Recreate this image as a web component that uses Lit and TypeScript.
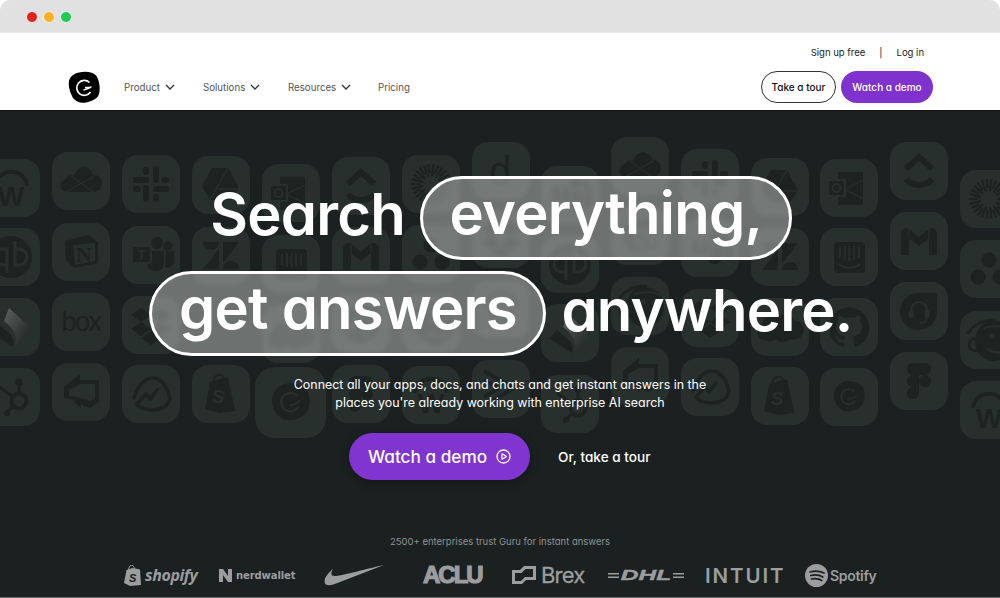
import { LitElement, html, css, svg } from "lit";
import { customElement } from "lit/decorators.js";

const T = "#28302d"; // tile colour
const D = "#1c2321"; // glyph colour

const spinner = () => {
  const out = [];
  for (let i = 0; i < 26; i++) {
    const a = (i / 26) * Math.PI * 2;
    const r1 = i % 2 ? 11 : 8;
    out.push(svg`<line x1=${29 + Math.cos(a) * r1} y1=${29 + Math.sin(a) * r1} x2=${29 + Math.cos(a) * 20} y2=${29 + Math.sin(a) * 20} stroke=${D} stroke-width="2.3"/>`);
  }
  return out;
};

const ICONS: Record<string, unknown> = {
  wrike: svg`<path d="M13 27C15 8 43 8 45 27" fill="none" stroke=${D} stroke-width="4"/><text x="29" y="47" text-anchor="middle" font-family="Liberation Sans" font-weight="700" font-size="28" fill=${D}>W</text>`,
  onedrive: svg`<path d="M16 40C7 40 6 29 14 27C15 24 19 22 22 24C25 13 38 12 41 23C48 22 52 30 49 35C47 39 44 40 42 40Z" fill=${D}/><path d="M19 24L41 40M44 23L14 40" stroke=${T} stroke-width="1.2"/>`,
  slack: svg`<g fill=${D}><rect x="11" y="22" width="16" height="6" rx="3"/><rect x="21" y="12" width="6" height="8" rx="3"/><rect x="31" y="11" width="6" height="17" rx="3"/><rect x="39" y="22" width="8" height="6" rx="3"/><rect x="31" y="31" width="16" height="6" rx="3"/><rect x="31" y="39" width="6" height="8" rx="3"/><rect x="21" y="30" width="6" height="17" rx="3"/><rect x="11" y="31" width="8" height="6" rx="3"/></g>`,
  drive: svg`<path d="M20 12H36L47 32L39 44H18L10 30Z" fill=${D}/><path d="M36 12L24 33H47M24 33L18 44" fill="none" stroke=${T} stroke-width="1.4"/>`,
  outlook: svg`<rect x="18" y="13" width="25" height="33" rx="1" fill=${D}/><path d="M24 30L44 21M24 30L44 40" stroke=${T} stroke-width="1.2"/><rect x="7" y="20" width="19" height="18" fill=${T}/><rect x="9" y="22" width="15" height="14" rx="1" fill=${D}/><circle cx="16.500" cy="29" r="4" fill="none" stroke=${T} stroke-width="2"/>`,
  clickup: svg`<path d="M16 27L29 15L42 27M16 37C22 45 36 45 42 37" fill="none" stroke=${D} stroke-width="6"/>`,
  spinner: svg`${spinner()}`,
  d: svg`<text x="28" y="43" text-anchor="middle" font-family="Liberation Sans" font-size="40" fill=${D}>d</text>`,
  qb: svg`<circle cx="29" cy="29" r="21" fill=${D}/><path d="M25 37H21A8 8 0 0 1 21 21H25V45M33 21H37A8 8 0 0 1 37 37H33V13" fill="none" stroke=${T} stroke-width="3"/>`,
  notion: svg`<path d="M13 18L36 12L46 19V40L22 45L14 37Z" fill=${D}/><path d="M21 22L43 20V38L23 42Z" fill=${T}/><text x="32" y="39" text-anchor="middle" font-family="Liberation Serif" font-weight="700" font-size="22" fill=${D}>N</text>`,
  teams: svg`<circle cx="35" cy="17" r="6" fill=${D}/><circle cx="46" cy="20" r="4.500" fill=${D}/><path d="M25 25H42V39A9 9 0 0 1 25 39Z" fill=${D}/><path d="M44 25H52V35A6.500 6.500 0 0 1 43 41Z" fill=${D}/><rect x="9" y="19" width="21" height="19" rx="2" fill=${T}/><rect x="11" y="21" width="17" height="15" rx="1.500" fill=${D}/><text x="19.500" y="33" text-anchor="middle" font-family="Liberation Sans" font-weight="700" font-size="13" fill=${T}>T</text>`,
  zendesk: svg`<g fill=${D}><path d="M11 15H27A8 8 0 0 1 11 15Z"/><path d="M27 22V42H11Z"/><path d="M31 36V15H47Z"/><path d="M31 42A8 8 0 0 1 47 42Z"/></g>`,
  intercom: svg`<rect x="14" y="14" width="31" height="31" rx="4" fill=${D}/><path d="M20 19V30M25 18V32M29.500 18V33M34 18V32M39 19V30M19 36C25 41 34 41 40 36" fill="none" stroke=${T} stroke-width="1.700"/>`,
  gmail: svg`<path d="M11 22C11 16 17 14 21 18L29 25L37 18C41 14 47 16 47 22V43H39V26L29 34L19 26V43H11Z" fill=${D}/><path d="M19 26V17M39 26V17" stroke=${T} stroke-width="1.200"/>`,
  asana: svg`<g fill=${D}><circle cx="29" cy="20" r="7.500"/><circle cx="18" cy="37" r="7.500"/><circle cx="40" cy="37" r="7.500"/></g>`,
  box: svg`<text x="29" y="38" text-anchor="middle" font-family="Liberation Sans" font-size="27" letter-spacing="-1.500" fill=${D}>box</text>`,
  dropbox: svg`<path d="M19 12L29 19L19 26L9 19ZM39 12L49 19L39 26L29 19ZM19 26L29 33L19 40L9 33ZM39 26L49 33L39 40L29 33ZM19 42L29 35L39 42L29 49Z" fill=${D}/>`,
  smart: svg`<defs><linearGradient id="sg" x1="0" y1="0" x2="1" y2="1"><stop offset="0" stop-color="#5c6361"/><stop offset="1" stop-color="#181d1c"/></linearGradient></defs><path d="M27 10L49 30L33 49C36 37 31 30 22 23Z" fill="url(#sg)"/><path d="M16 26L29 37C32 41 32 45 31 49L8 34Z" fill=${D}/>`,
  cloud: svg`<path d="M14 42C5 42 3 30 11 27C11 19 20 15 26 20C31 14 41 15 44 23C51 23 55 31 51 37C48 42 43 42 39 41C35 45 28 45 25 41C21 44 17 44 14 42Z" fill=${D}/>`,
  github: svg`<g transform="translate(9 9) scale(1.680)"><path fill=${D} d="M12 .297c-6.63 0-12 5.373-12 12 0 5.303 3.438 9.8 8.205 11.385.6.113.82-.258.82-.577 0-.285-.01-1.04-.015-2.04-3.338.724-4.042-1.61-4.042-1.61C4.422 18.07 3.633 17.7 3.633 17.7c-1.087-.744.084-.729.084-.729 1.205.084 1.838 1.236 1.838 1.236 1.07 1.835 2.809 1.305 3.495.998.108-.776.417-1.305.76-1.605-2.665-.3-5.466-1.332-5.466-5.93 0-1.31.465-2.38 1.235-3.22-.135-.303-.54-1.523.105-3.176 0 0 1.005-.322 3.3 1.23.96-.267 1.98-.399 3-.405 1.02.006 2.04.138 3 .405 2.28-1.552 3.285-1.23 3.285-1.23.645 1.653.24 2.873.12 3.176.765.84 1.23 1.91 1.23 3.22 0 4.61-2.805 5.625-5.475 5.92.42.36.81 1.096.81 2.22 0 1.606-.015 2.896-.015 3.286 0 .315.21.69.825.57C20.565 22.092 24 17.592 24 12.297c0-6.627-5.373-12-12-12"/></g>`,
  headset: svg`<path d="M29 11H44A3 3 0 0 1 47 14V30A18.500 18.500 0 1 1 29 11Z" fill=${D}/><path d="M21 33V28A8 8 0 0 1 37 28V33M37 35C37 39 34 41 30 41" fill="none" stroke=${T} stroke-width="2"/><rect x="18.500" y="28" width="5" height="8" rx="2" fill=${T}/><rect x="34.500" y="28" width="5" height="8" rx="2" fill=${T}/>`,
  chimp: svg`<ellipse cx="34" cy="30" rx="19" ry="20" fill=${D}/><circle cx="15" cy="34" r="6" fill="none" stroke=${D} stroke-width="2.500"/><path d="M8 23C12 14 24 8 36 9" fill="none" stroke=${D} stroke-width="3"/><circle cx="32" cy="25" r="2.500" fill=${T}/><circle cx="43" cy="25" r="2.500" fill=${T}/><path d="M27 37C32 43 42 43 47 37" fill="none" stroke=${T} stroke-width="2.500"/><path d="M24 18C28 14 44 14 50 19" fill="none" stroke=${T} stroke-width="1.800"/>`,
  hubspot: svg`<g fill="none" stroke=${D}><circle cx="37" cy="33" r="7.500" stroke-width="4"/><path d="M37 24V15M30 39L25 45M30 28L16 18" stroke-width="3"/></g><g fill=${D}><circle cx="37" cy="14" r="3.800"/><circle cx="25" cy="45" r="3"/></g>`,
  office: svg`<path d="M12 24L28 11V17L47 17V39L38 45L21 38L29 38L12 35ZM17 27V33L29 35L38 38L43 36V21L28 21Z" fill=${D} fill-rule="evenodd"/><path d="M21 38L29 36V45Z" fill=${D}/>`,
  basecamp: svg`<path d="M12 33C15 22 22 13 31 13C40 13 46 24 48 33C47 41 39 45 30 45C23 45 18 43 15 39L24 29L28 34L35 25" fill="none" stroke=${D} stroke-width="3.500" stroke-linecap="round" stroke-linejoin="round"/>`,
  shopify: svg`<path d="M13 44L18 17L36 12L43 46L28 48Z" fill=${D}/><path d="M21 18C22 8 31 7 32 14" fill="none" stroke=${D} stroke-width="1.600"/><text x="26" y="38" text-anchor="middle" font-family="Liberation Sans" font-weight="700" font-style="italic" font-size="19" fill=${T}>S</text>`,
  guru: svg`<g transform="translate(8 8) scale(.72)"><path d="M20 9C29 5 42 8 48 15C52 22 52 33 47 41C42 47 32 50 24 49C16 47 9 39 8 28C8 20 13 12 20 9Z" fill=${D}/><path d="M37 22A10.500 10.500 0 1 0 38 34" fill="none" stroke=${T} stroke-width="2.500"/><path d="M28 32C32 32 36 31 40 27" fill="none" stroke=${T} stroke-width="2"/></g>`,
  figma: svg`<g fill=${D}><path d="M29 11H23A6 6 0 0 0 23 23H29Z"/><path d="M29 11H35A6 6 0 0 1 35 23H29Z"/><path d="M29 23H23A6 6 0 0 0 23 35H29Z"/><circle cx="35" cy="29" r="6"/><path d="M23 35H29V41A6 6 0 1 1 23 35Z"/></g>`,
  arrows: svg`<path d="M12 11L42 28L12 46M12 20L27 28L12 37" fill="none" stroke=${D} stroke-width="3.500"/>`,
};

const TILES: [number, number, string, number?][] = [
  [-18, 159, "wrike"], [-18, 228, "qb"], [-18, 298, "smart"], [-18, 368, "hubspot"],
  [52, 152, "onedrive"], [52, 223, "notion"], [52, 293, "box"], [52, 363, "office"],
  [122, 155, "slack"], [122, 226, "teams"], [122, 296, "dropbox"], [122, 365, "basecamp"],
  [192, 156, "drive"], [192, 227, "zendesk"], [192, 365, "shopify"],
  [262, 164, "outlook"], [262, 235, "intercom"], [262, 305, "cloud"], [255, 367, "guru", 71],
  [332, 157, "clickup"], [332, 227, "gmail"], [332, 295, "headset"], [332, 365, "figma"],
  [402, 155, "spinner"], [402, 225, "asana"], [402, 295, "chimp"], [402, 366, "wrike"],
  [472, 142, "d"], [472, 210, "dropbox"], [472, 280, "wrike"], [472, 360, "arrows"],
  [541, 166, "teams"], [541, 235, "qb"], [541, 304, "smart"], [541, 375, "hubspot"],
  [611, 137, "onedrive"], [611, 207, "notion"], [611, 277, "chimp"], [611, 347, "office"],
  [681, 149, "slack"], [681, 219, "teams"], [681, 289, "dropbox"], [681, 358, "basecamp"],
  [751, 158, "drive"], [751, 228, "zendesk"], [751, 298, "cloud"], [751, 367, "shopify"],
  [820, 159, "outlook"], [820, 228, "intercom"], [820, 298, "github"], [820, 368, "guru"],
  [890, 142, "clickup"], [890, 212, "gmail"], [890, 282, "headset"], [890, 352, "figma"],
  [960, 170, "spinner"], [960, 240, "asana"], [960, 311, "chimp"], [960, 381, "wrike"],
];

const chevron = html`<svg class="chev" width="10" height="6" viewBox="0 0 10 6"><path d="M1 1L5 5L9 1" fill="none" stroke="#333" stroke-width="1.300"/></svg>`;

@customElement("app-root")
export class AppRoot extends LitElement {
  static styles = css`
    :host { display: block; width: 1000px; height: 598px; overflow: hidden; background: #fff;
      font-family: "Inter", "Liberation Sans", sans-serif; font-feature-settings: "cv11" 1; }
    * { box-sizing: border-box; }
    .page { display: flex; flex-direction: column; height: 598px; }
    .chrome { height: 33px; background: #e1e1e1; border-radius: 10px 10px 0 0; display: flex; align-items: center; gap: 5px; padding: 1px 0 0 26px; flex: none; border-bottom: 1px solid #e9e9e9; }
    .dot { width: 12px; height: 12px; border-radius: 50%; border: 1px solid #f4f4f4; }
    .red { background: #e0241b; } .amber { background: #fdb022; } .green { background: #1fcb51; }
    .top { height: 77px; flex: none; background: #fff; padding: 0 67px 0 68px; display: flex; flex-direction: column; }
    .util { display: flex; justify-content: flex-end; align-items: center; height: 38px; padding-right: 9px; font-size: 9.500px; color: #222; gap: 14px; }
    .main { display: flex; align-items: center; height: 32px; }
    .logo { width: 32px; height: 32px; flex: none; display: block; }
    .nav { display: flex; align-items: center; margin-left: 24px; font-size: 9.700px; color: #555; flex: 1; }
    .nav span { display: inline-flex; align-items: center; gap: 5px; }
    .nav .i1 { width: 79px; } .nav .i2 { width: 85px; } .nav .i3 { width: 90px; }
    .chev { flex: none; }
    .btn { height: 32px; border-radius: 16px; display: flex; align-items: center; justify-content: center; font-size: 10px; font-weight: 500; flex: none; }
    .tour { width: 75px; border: 1px solid #333; color: #111; margin-right: 5px; }
    .demo { width: 92px; background: #7f32cd; color: #fff; }
    .hero { flex: 1; background: #1b2120; position: relative; overflow: hidden; border-top: 1px solid #111; border-bottom: 1px solid #6b6e6e; display: flex; flex-direction: column; align-items: center; color: #fff; padding-top: 65px; }
    .canvas { position: absolute; left: 0; top: -111px; width: 1000px; height: 598px; }
    .tile { position: absolute; width: 58px; height: 58px; border-radius: 16px; background: #28302d; }
    .tile svg { display: block; width: 100%; height: 100%; }
    .line { position: relative; display: flex; align-items: center; gap: 15px; font-size: 58px; font-weight: 560; letter-spacing: -0.75px; height: 84px; white-space: nowrap; transform: translateX(1px); }
    .line + .line { margin-top: 11px; height: 85px; }
    .bare { line-height: 70px; padding-bottom: 8px; }
    .pill { display: block; height: 100%; border: 3px solid #fff; border-radius: 44px; background: rgba(255,255,255,.36); backdrop-filter: blur(2px); padding: 0 26.500px; line-height: 68px; }
    .sub { position: relative; margin: 20px 0 0; font-size: 12.450px; line-height: 18px; text-align: center; color: #fff; }
    .cta { position: relative; display: flex; align-items: center; margin-top: 21px; }
    .watch { width: 181px; height: 47px; border-radius: 24px; background: #8035d0; display: flex; align-items: center; justify-content: center; gap: 9px; font-size: 17.200px; font-weight: 500; box-shadow: 0 2px 8px rgba(0,0,0,.35); }
    .alt { margin-left: 28px; font-size: 13.600px; font-weight: 500; width: 93px; white-space: nowrap; }
    .trust { position: relative; margin-top: 55px; font-size: 9.500px; color: #8f9291; line-height: 14px; }
    .logos { position: relative; display: flex; align-items: center; width: 1000px; height: 24px; margin-top: 14px; padding-left: 123px; color: #9b9d9f; white-space: nowrap; }
    .logos svg { display: block; flex: none; }
    .lg { display: flex; align-items: center; flex: none; }
    .shop { width: 96px; gap: 4px; font: italic 700 16px "Open Sans", sans-serif; letter-spacing: -.4px; }
    .nerd { width: 105px; gap: 4px; font: 700 10px "DejaVu Sans", sans-serif; letter-spacing: -.1px; }
    .nike { width: 99px; }
    .aclu { width: 88px; font: 700 24px "Liberation Sans", sans-serif; letter-spacing: -2px; -webkit-text-stroke: 1.200px #9b9d9f; }
    .brex { width: 97px; gap: 5px; font: 400 22px "Inter", sans-serif; letter-spacing: -.8px; -webkit-text-stroke: .3px #9b9d9f; }
    .dhl { width: 97px; font: italic 700 14px "Liberation Sans", sans-serif; }
    .dhl span { display: inline-block; width: 54px; text-align: center; transform: scaleX(1.750); -webkit-text-stroke: .4px #9b9d9f; }
    .intuit { width: 100px; font: 600 20.500px "Inter", sans-serif; letter-spacing: 1.900px; }
    .spot { gap: 2px; font: 600 14px "Inter", sans-serif; letter-spacing: -.3px; }
  `;

  render() {
    return html`<div class="page">
      <div class="chrome"><i class="dot red"></i><i class="dot amber"></i><i class="dot green"></i></div>
      <header class="top">
        <div class="util"><span>Sign up free</span><span>|</span><span>Log in</span></div>
        <div class="main">
          <svg class="logo" viewBox="0 0 32 32">
            <path d="M11 1.500C17 0 25 .5 28.500 5C31.500 10 32.500 17 31 23C29.500 28 24 30 18 31.500C13 32.500 8 31 5 27C2 22 0 15 1 10C2 5.500 6 2.500 11 1.500Z" fill="#000"/>
            <path d="M21.500 11.500A7.500 7.500 0 1 0 22.500 21" fill="none" stroke="#fff" stroke-width="1.700"/>
            <path d="M15.500 19C19 18.500 21.500 17.500 23.500 15.500M17 16.500H23" fill="none" stroke="#fff" stroke-width="1.300"/>
          </svg>
          <nav class="nav">
            <span class="i1">Product ${chevron}</span>
            <span class="i2">Solutions ${chevron}</span>
            <span class="i3">Resources ${chevron}</span>
            <span>Pricing</span>
          </nav>
          <div class="btn tour">Take a tour</div>
          <div class="btn demo">Watch a demo</div>
        </div>
      </header>
      <section class="hero">
        <div class="canvas">
          ${TILES.map(([x, y, name, size]) => html`<div class="tile" style="left:${x}px;top:${y}px;${size ? `width:${size}px;height:${size}px;border-radius:20px;` : ""}"><svg viewBox="0 0 58 58">${ICONS[name]}</svg></div>`)}
        </div>
        <div class="line"><span class="bare">Search</span><span class="pill">everything,</span></div>
        <div class="line"><span class="pill">get answers</span><span class="bare">anywhere.</span></div>
        <p class="sub">Connect all your apps, docs, and chats and get instant answers in the<br>places you're already working with enterprise AI search</p>
        <div class="cta">
          <div class="watch">Watch a demo
            <svg width="15" height="15" viewBox="0 0 15 15"><circle cx="7.500" cy="7.500" r="6.500" fill="none" stroke="#fff" stroke-width="1.300"/><path d="M6 4.800L10.500 7.500L6 10.200Z" fill="none" stroke="#fff" stroke-width="1.200" stroke-linejoin="round"/></svg>
          </div>
          <div class="alt">Or, take a tour</div>
        </div>
        <div class="trust">2500+ enterprises trust Guru for instant answers</div>
        <div class="logos">
          <div class="lg shop"><svg width="18" height="21" viewBox="0 0 18 21"><path d="M1 18L3.500 5L9.500 3L17 4.500L18 20L7 21Z" fill="#9b9d9f"/><path d="M5.500 5C6 -1 11 -1 11.500 4" fill="none" stroke="#9b9d9f" stroke-width="1"/><text x="6" y="17" font-family="Liberation Sans" font-weight="700" font-style="italic" font-size="11" fill="#1b2120">S</text></svg>shopify</div>
          <div class="lg nerd"><svg width="13" height="13" viewBox="0 0 13 13"><path d="M0 0H4L9 7V0H13V13H9L4 6V13H0Z" fill="#9b9d9f"/></svg>nerdwallet</div>
          <div class="lg nike"><svg width="60" height="22" viewBox="0 0 60 22"><path d="M60 1L16 18C9 21 3 22.500 1 19.500C-1 15 4 9 9 5C6 10 7 12.500 12 12C20 11 42 5 60 1Z" fill="#9b9d9f"/></svg></div>
          <div class="lg aclu">ACLU</div>
          <div class="lg brex"><svg width="25" height="20" viewBox="0 0 25 20"><path d="M1 5H9L13 1H25V15H15L11 19H1Z M4 8V16H10L14 12H22V4H14.500L10.500 8Z" fill="#9b9d9f" fill-rule="evenodd"/></svg>Brex</div>
          <div class="lg dhl"><svg width="11" height="7" viewBox="0 0 11 7"><path d="M0 1H11V2.500H0ZM0 4.500H11V6H0Z" fill="#9b9d9f"/></svg><span>DHL</span><svg width="11" height="7" viewBox="0 0 11 7"><path d="M0 1H11V2.500H0ZM0 4.500H11V6H0Z" fill="#9b9d9f"/></svg></div>
          <div class="lg intuit">INTUIT</div>
          <div class="lg spot"><svg width="23" height="23" viewBox="0 0 23 23"><circle cx="11.500" cy="11.500" r="11.500" fill="#9b9d9f"/><path d="M5 8C10 6.500 15 7 19 9M5.800 11.500C10 10.500 14.500 11 17.800 13M6.500 15C10 14.200 14 14.700 16.800 16.400" fill="none" stroke="#1b2120" stroke-width="1.700" stroke-linecap="round"/></svg>Spotify</div>
        </div>
      </section>
    </div>`;
  }
}
